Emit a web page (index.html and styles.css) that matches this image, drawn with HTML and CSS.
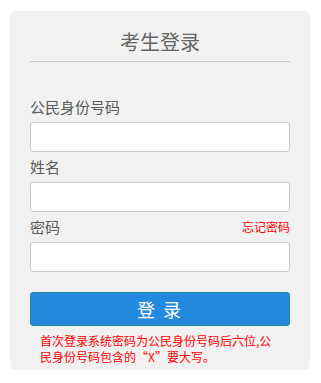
FILE: index.html
```html
<!DOCTYPE html>
<html lang="zh-CN">
<head>
<meta charset="utf-8">
<title>考生登录</title>
<link rel="stylesheet" href="styles.css">
</head>
<body>
<div class="card">
  <h2 class="title">考生登录</h2>
  <form class="form">
    <label class="label">公民身份号码</label>
    <input class="input" type="text">
    <label class="label">姓名</label>
    <input class="input" type="text">
    <div class="label row">
      <span>密码</span>
      <a class="forgot" href="#">忘记密码</a>
    </div>
    <input class="input" type="password">
    <button class="btn" type="button">登 录</button>
    <p class="note">首次登录系统密码为公民身份号码后六位,公民身份号码包含的“X”要大写。</p>
  </form>
</div>
</body>
</html>
```
FILE: styles.css
```css
* { box-sizing: border-box; }
body {
  margin: 0;
  background: #fff;
  font-family: "Noto Sans CJK SC", "Noto Sans", sans-serif;
}
.card {
  margin: 11px 0 0 10px;
  width: 300px;
  background: #f1f1f1;
  border-radius: 6px;
  padding: 17px 20px 5px;
}
.title {
  margin: 0;
  font-size: 20px;
  line-height: 28px;
  font-weight: normal;
  color: #666;
  text-align: center;
  padding-bottom: 5px;
  border-bottom: 1px solid #ccc;
}
.form {
  display: flex;
  flex-direction: column;
  margin-top: 30px;
}
.label {
  display: block;
  height: 30px;
  line-height: 30px;
  font-size: 15px;
  color: #5a5a5a;
}
.row {
  display: flex;
  justify-content: space-between;
  align-items: center;
}
.forgot {
  font-size: 12px;
  color: #f00;
  text-decoration: none;
}
.input {
  display: block;
  width: 260px;
  height: 30px;
  border: 1px solid #ccc;
  border-radius: 3px;
  background: #fff;
  margin: 0;
}
.btn {
  margin-top: 20px;
  height: 34px;
  width: 260px;
  background: #2289df;
  border: 1px solid #1f8a8c;
  border-radius: 3px;
  color: #fff;
  font-family: inherit;
  font-size: 18px;
  letter-spacing: 2px;
  padding: 0;
}
.note {
  margin: 7px 0 0;
  padding: 0 10px;
  font-size: 12px;
  line-height: 16px;
  color: #f00;
}
```
